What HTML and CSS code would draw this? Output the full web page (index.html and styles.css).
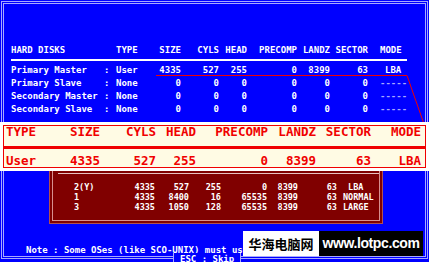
FILE: index.html
```html
<!DOCTYPE html>
<html lang="en">
<head>
  <meta charset="UTF-8">
  <meta name="viewport" content="width=device-width, initial-scale=1.0">
  <title>Standard CMOS - Hard Disks</title>
  <link rel="stylesheet" href="styles.css">
</head>
<body>
  <div class="screen">
    <div class="frame">
      <div class="disks">
        <div class="row head">
          <span class="wide">HARD DISKS</span><span>TYPE</span><span class="r">SIZE</span><span class="r">CYLS</span><span class="r">HEAD</span><span class="r">PRECOMP</span><span class="r">LANDZ</span><span class="r">SECTOR</span><span class="mode">MODE</span>
        </div>
        <div class="row">
          <span>Primary Master</span><span>:</span><span>User</span><span class="r">4335</span><span class="r">527</span><span class="r">255</span><span class="r">0</span><span class="r">8399</span><span class="r">63</span><span class="mode lba">LBA</span>
        </div>
        <div class="row">
          <span>Primary Slave</span><span>:</span><span>None</span><span class="r">0</span><span class="r">0</span><span class="r">0</span><span class="r">0</span><span class="r">0</span><span class="r">0</span><span class="mode dash">-----</span>
        </div>
        <div class="row">
          <span>Secondary Master</span><span>:</span><span>None</span><span class="r">0</span><span class="r">0</span><span class="r">0</span><span class="r">0</span><span class="r">0</span><span class="r">0</span><span class="mode dash">-----</span>
        </div>
        <div class="row">
          <span>Secondary Slave</span><span>:</span><span>None</span><span class="r">0</span><span class="r">0</span><span class="r">0</span><span class="r">0</span><span class="r">0</span><span class="r">0</span><span class="mode dash">-----</span>
        </div>
      </div>

      <div class="detect">
        <div class="detect-inner">
          <div class="detect-rule"></div>
          <div class="drow"><span>2(Y)</span><span class="r">4335</span><span class="r">527</span><span class="r">255</span><span class="r">0</span><span class="r">8399</span><span class="r">63</span><span class="dmode">&nbsp;LBA</span></div>
          <div class="drow"><span>1</span><span class="r">4335</span><span class="r">8400</span><span class="r">16</span><span class="r">65535</span><span class="r">8399</span><span class="r">63</span><span class="dmode">NORMAL</span></div>
          <div class="drow"><span>3</span><span class="r">4335</span><span class="r">1050</span><span class="r">128</span><span class="r">65535</span><span class="r">8399</span><span class="r">63</span><span class="dmode">LARGE</span></div>
        </div>
      </div>

      <p class="note">Note : Some OSes (like SCO-UNIX) must use "NORMAL" for installation</p>
    </div>

    <div class="esc">ESC : Skip</div>

    <svg class="pointer" width="429" height="262" viewBox="0 0 429 262">
      <polyline points="156,75.5 407,75.5 424,124" fill="none" stroke="#f00000" stroke-width="1"/>
    </svg>

    <div class="callout">
      <div class="callout-box">
        <div class="crow">
          <span>TYPE</span><span class="r">SIZE</span><span class="r">CYLS</span><span class="r">HEAD</span><span class="r">PRECOMP</span><span class="r">LANDZ</span><span class="r">SECTOR</span><span class="r">MODE</span>
        </div>
        <div class="callout-rule"></div>
        <div class="crow">
          <span>User</span><span class="r">4335</span><span class="r">527</span><span class="r">255</span><span class="r">0</span><span class="r">8399</span><span class="r">63</span><span class="r">LBA</span>
        </div>
      </div>
    </div>

    <div class="watermark">
      <span class="wm-cn">华海电脑网</span><span class="wm-en">www.lotpc.com</span>
    </div>
  </div>
</body>
</html>
```

FILE: styles.css
```css
body {
  margin: 0;
  background: #0000ff;
  font-family: "DejaVu Sans Mono", "Liberation Mono", monospace;
  color: #ffffff;
}
.screen {
  position: relative;
  width: 429px;
  height: 262px;
  overflow: hidden;
  background: #0000ff;
}
.frame {
  box-sizing: border-box;
  width: 427px;
  height: 258px;
  margin: 1px;
  border: 3px double #a8a8ff;
}

/* hard disk table */
.disks {
  width: 396px;
  margin: 40px 0 0 7px;
  font-size: 9px;
  font-weight: bold;
}
.row {
  display: grid;
  grid-template-columns: 93px 12px 40px 25px 38px 28px 50px 33px 38px 39px;
  line-height: 13px;
  white-space: nowrap;
}
.row.head {
  padding-bottom: 2px;
  border-bottom: 2px solid #ffffff;
  margin-bottom: 3px;
}
.wide {
  grid-column: span 2;
}
.r {
  text-align: right;
}
.mode {
  padding-left: 12px;
}
.mode.lba {
  padding-left: 17px;
}
.dash {
  color: #a8a8ff;
}

/* auto detect box */
.detect {
  box-sizing: border-box;
  width: 334px;
  margin: 34px 0 0 45px;
  padding: 2px;
  border: 1px solid #b05050;
  background: #800000;
}
.detect-inner {
  border: 1px solid #d89090;
  padding: 19px 0 8px 0;
}
.detect-rule {
  margin: 0 0 8px 5px;
  border-top: 1px solid #e8c0c0;
}
.drow {
  display: grid;
  grid-template-columns: 46px 35px 34px 32px 46px 31px 39px 40px;
  padding-left: 21px;
  font-size: 8.5px;
  font-weight: bold;
  line-height: 10px;
  white-space: nowrap;
}
.dmode {
  padding-left: 6px;
}

.note {
  margin: 20px 0 0 22px;
  font-size: 9px;
  font-weight: bold;
  line-height: 13px;
  white-space: nowrap;
}

.esc {
  position: absolute;
  left: 173px;
  top: 253px;
  padding: 0 6px;
  border-left: 1px solid #a8a8ff;
  border-right: 1px solid #a8a8ff;
  background: #0000ff;
  font-size: 9px;
  font-weight: bold;
  line-height: 13px;
  white-space: nowrap;
}

.pointer {
  position: absolute;
  left: 0;
  top: 0;
}

/* magnified callout */
.callout {
  position: absolute;
  left: 0;
  top: 122px;
  box-sizing: border-box;
  width: 429px;
  padding: 3px;
  background: #ffffff;
}
.callout-box {
  border: 1px solid #f00000;
  background: #fffbe4;
  color: #f00000;
}
.crow {
  display: grid;
  grid-template-columns: 56px 38px 56px 40px 72px 48px 55px 50px;
  padding-left: 2px;
  font-size: 12.5px;
  font-weight: bold;
  line-height: 12px;
  white-space: nowrap;
}
.callout-rule {
  height: 3px;
  margin: 8px 0 6px 0;
  background: #f00000;
}

.watermark {
  position: absolute;
  left: 243px;
  top: 231px;
  display: flex;
  height: 25px;
}
.wm-cn {
  width: 76px;
  background: #ffffff;
  color: #000000;
  font-family: "Noto Sans CJK SC", sans-serif;
  font-size: 13px;
  font-weight: bold;
  line-height: 25px;
  text-align: center;
}
.wm-en {
  width: 104px;
  background: #000000;
  color: #ffffff;
  font-family: "Liberation Sans", Arial, sans-serif;
  font-size: 14px;
  font-weight: bold;
  letter-spacing: -0.4px;
  line-height: 25px;
  text-align: center;
}
```
